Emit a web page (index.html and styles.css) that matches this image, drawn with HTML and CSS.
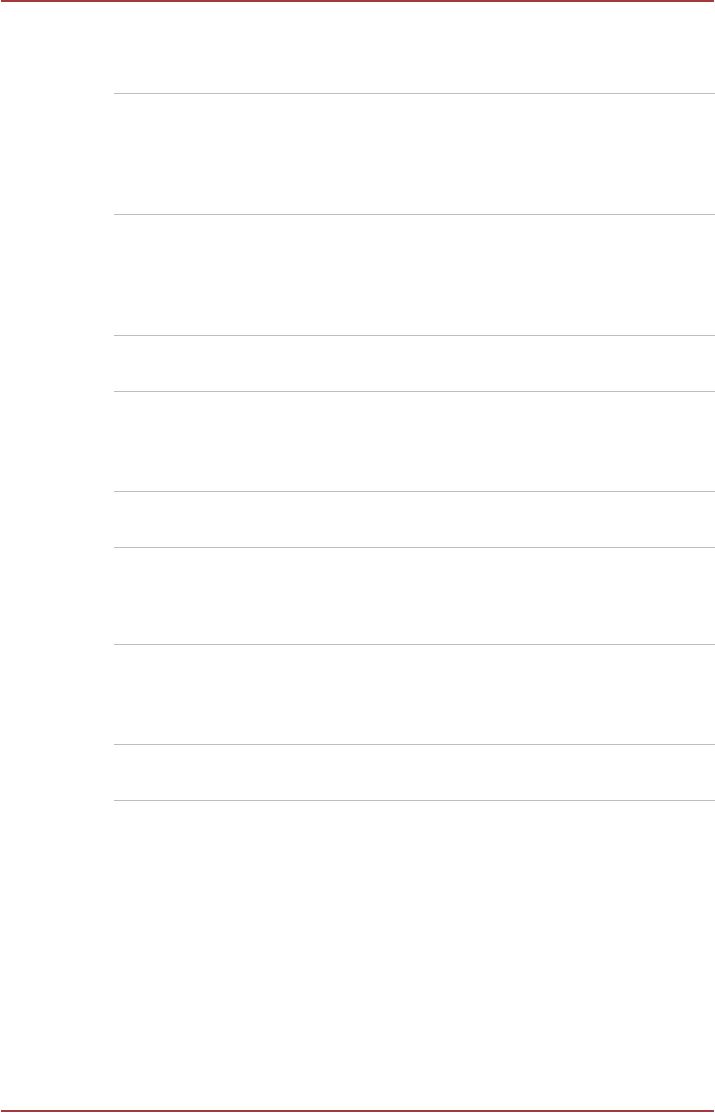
FILE: index.html
```html
<!DOCTYPE html>
<html lang="en">
<head>
  <meta charset="UTF-8">
  <meta name="viewport" content="width=device-width, initial-scale=1.0">
  <title>Page</title>
  <link rel="stylesheet" href="styles.css">
</head>
<body>
  <div class="page">
    <div class="rule-top"></div>

    <div class="rows">
      <div class="row tall"></div>
      <div class="row tall"></div>
      <div class="row short"></div>
      <div class="row mid"></div>
      <div class="row short"></div>
      <div class="row mid2"></div>
      <div class="row mid"></div>
      <div class="row short last"></div>
    </div>

    <div class="rule-bottom"></div>
  </div>
</body>
</html>
```
FILE: styles.css
```css
html, body {
  margin: 0;
  padding: 0;
  background-color: #fff;
}
body {
  font-family: "Liberation Sans", Arial, sans-serif;
  color: #333;
}
.page {
  height: 1113px;
  display: flex;
  flex-direction: column;
}
.rule-top {
  height: 2px;
  margin: 0 1px;
  background-color: #a33a3a;
}
.rows {
  margin-top: 91px;
  margin-left: 114px;
}
.row {
  border-top: 1px solid #bdbdbd;
  box-sizing: border-box;
}
.row.tall {
  height: 121px;
}
.row.mid {
  height: 100px;
}
.row.mid2 {
  height: 97px;
}
.row.short {
  height: 56px;
}
.row.last {
  border-bottom: 1px solid #bdbdbd;
  height: 57px;
}
.rule-bottom {
  margin: auto 1px 1px;
  height: 2px;
  background-color: #a33a3a;
}
```
